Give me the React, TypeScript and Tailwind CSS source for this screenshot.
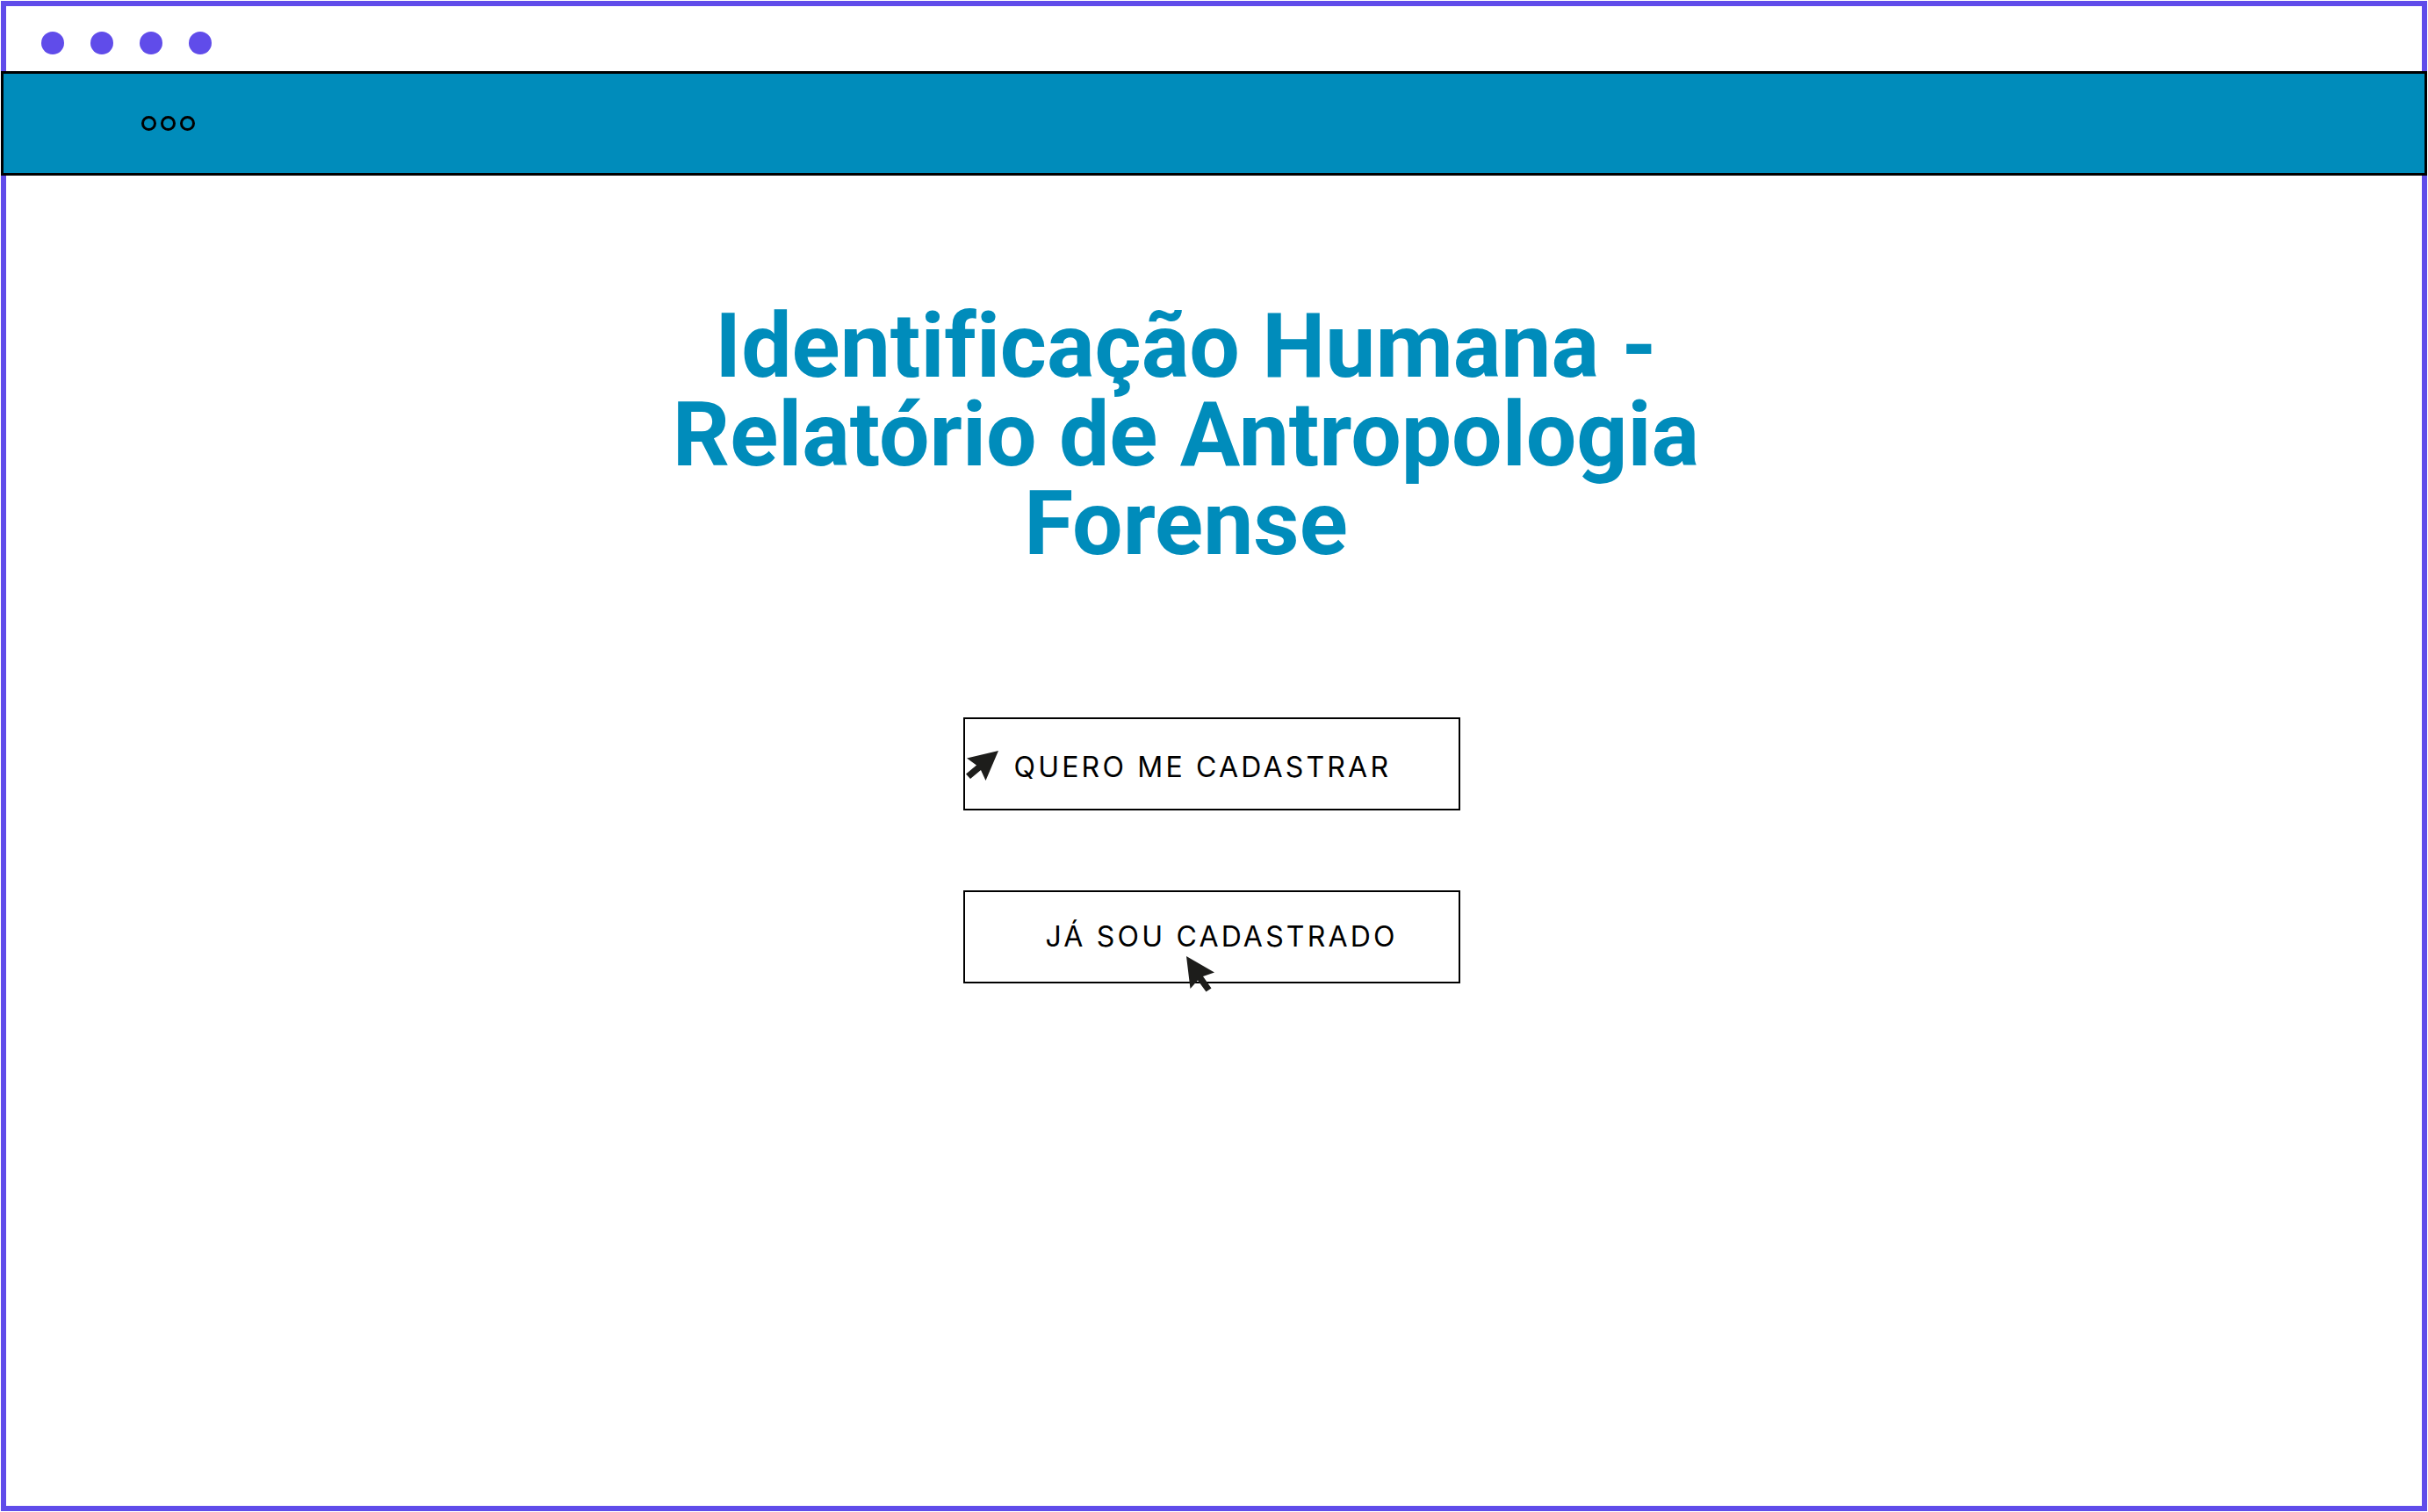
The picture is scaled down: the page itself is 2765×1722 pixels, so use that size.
function WindowDots() {
  return (
    <div className="flex h-[74px] items-center gap-[30px] pt-[10px] pl-10" aria-hidden="true">
      {[0, 1, 2, 3].map((i) => (
        <span key={i} className="size-[26px] rounded-full bg-[#604cea]" />
      ))}
    </div>
  );
}

function NavBar() {
  return (
    <header className="-mx-1.5 flex h-[119px] items-center border-3 border-black bg-[#008cbb] pl-[157px]">
      <button type="button" aria-label="Menu" className="flex items-center gap-[5px]">
        {[0, 1, 2].map((i) => (
          <span key={i} className="size-[17px] rounded-full border-3 border-black" />
        ))}
      </button>
    </header>
  );
}

export default function App() {
  return (
    <div className="flex min-h-screen bg-white p-px">
      <div className="flex flex-1 flex-col border-6 border-[#604cea]">
        <WindowDots />
        <NavBar />
        <main className="flex flex-col items-center pt-36 pb-16">
          <div className="pr-16">
            <h1 className="max-w-[1300px] text-center font-[Roboto,sans-serif] text-[102px] leading-[101px] font-bold text-[#008cbb] [font-variant-ligatures:none]">
              Identificação Humana - Relatório de Antropologia Forense
            </h1>
          </div>
          <div className="mt-[170px] mr-1.5 flex flex-col gap-[91px] font-[Inter,sans-serif] text-[32px] leading-10 tracking-widest text-black">
            <button
              type="button"
              className="relative flex h-[106px] w-[566px] items-center border-2 border-black pt-2 pl-14"
            >
              <svg
                className="absolute top-9 left-0 h-[36px] w-[40px] fill-[#1d1d1b]"
                viewBox="1099 855 40 36"
                aria-hidden="true"
              >
                <path d="M1137 855 L1101 863.5 L1112 871.5 L1100 881.5 L1105 887 L1117 877 L1122.5 889 Z" />
              </svg>
              QUERO ME CADASTRAR
            </button>
            <button
              type="button"
              className="relative flex h-[106px] w-[566px] items-center border-2 border-black pl-23"
            >
              JÁ SOU CADASTRADO
              <svg
                className="absolute top-[73px] left-[252px] h-[42px] w-[34px] fill-[#1d1d1b]"
                viewBox="1351 1089 34 42"
                aria-hidden="true"
              >
                <path d="M1351 1089 L1383 1107.5 L1370 1112 L1379.5 1125.5 L1373.5 1129.5 L1364 1116.5 L1355.5 1126 Z" />
              </svg>
            </button>
          </div>
        </main>
      </div>
    </div>
  );
}
